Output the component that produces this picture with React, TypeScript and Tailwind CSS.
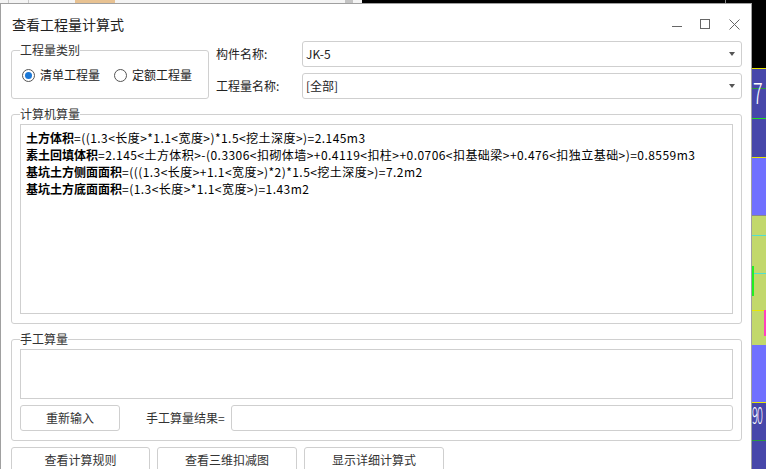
import type { ReactNode } from 'react';

const formulas = [
  { label: '土方体积', expr: '=((1.3<长度>*1.1<宽度>)*1.5<挖土深度>)=2.145m3' },
  {
    label: '素土回填体积',
    expr: '=2.145<土方体积>-(0.3306<扣砌体墙>+0.4119<扣柱>+0.0706<扣基础梁>+0.476<扣独立基础>)=0.8559m3',
  },
  { label: '基坑土方侧面面积', expr: '=(((1.3<长度>+1.1<宽度>)*2)*1.5<挖土深度>)=7.2m2' },
  { label: '基坑土方底面面积', expr: '=(1.3<长度>*1.1<宽度>)=1.43m2' },
];

function Caret() {
  return (
    <svg width="6" height="4" viewBox="0 0 6 4">
      <path d="M0 0h6L3 4z" fill="#555" />
    </svg>
  );
}

function Select({ value }: { value: string }) {
  return (
    <div className="flex h-[26px] items-center justify-between rounded-[3px] border border-[#cfcfcf] bg-white pl-[3px] pr-[6px]">
      <span className="text-[12px] text-[#222]">{value}</span>
      <Caret />
    </div>
  );
}

function Radio({ checked, label }: { checked?: boolean; label: string }) {
  return (
    <label className="flex items-center gap-[5px]">
      <span className="flex h-[13px] w-[13px] items-center justify-center rounded-full border border-[#555] bg-white">
        {checked && <span className="h-[7px] w-[7px] rounded-full bg-[#1c78d6]" />}
      </span>
      <span className="text-[12px] text-[#222]">{label}</span>
    </label>
  );
}

function Group({ title, className, children }: { title: string; className: string; children: ReactNode }) {
  return (
    <fieldset className={`rounded-[3px] border border-[#d0d0d0] px-[8px] ${className}`}>
      <legend className="text-[12px] leading-[16px] text-[#333]">{title}</legend>
      {children}
    </fieldset>
  );
}

function Button({ children, className }: { children: ReactNode; className: string }) {
  return (
    <button className={`flex h-[26px] items-center justify-center rounded-[3px] border border-[#cfcfcf] bg-white text-[12px] text-[#333] ${className}`}>
      {children}
    </button>
  );
}

// CAD view peeking out behind the dialog
function BackgroundStrip() {
  return (
    <div className="flex w-[14px] flex-col overflow-hidden">
      <div className="h-[65px] bg-black" />
      <div className="h-px bg-[#e8e800]" />
      <div className="relative flex h-[88px] flex-col bg-[#4747aa]">
        <div className="mt-[19px] h-px bg-[#2a9a40]" />
        <span className="absolute left-[1px] top-[8px] origin-top-left scale-y-[1.6] text-[18px] leading-[18px] font-light text-white">7</span>
        <div className="mt-[29px] h-px bg-[#22dd22]" />
      </div>
      <div className="h-px bg-[#e8e800]" />
      <div className="h-[57px] bg-[#7070ff]" />
      <div className="h-px bg-[#8a8a8a]" />
      <div className="relative flex h-[129px] flex-col bg-[#c2d86c]">
        <div className="mt-[19px] h-px bg-[#50e0d0]" />
        <div className="mt-[37px] h-px bg-[#50e0d0]" />
        <div className="absolute left-0 top-[50px] h-[30px] w-[2px] bg-[#22ee22]" />
        <div className="mt-[36px] h-px bg-[#e8e800]" />
        <div className="absolute right-0 top-[94px] h-[26px] w-[2px] bg-[#ff40c0]" />
      </div>
      <div className="h-[57px] bg-[#7070ff]" />
      <div className="h-px bg-[#e8e800]" />
      <div className="relative flex flex-1 flex-col bg-[#4747aa]">
        <span className="absolute left-0 top-[-3px] origin-top-left scale-y-[2.2] text-[11px] leading-[12px] font-light tracking-[-1px] text-white">90</span>
        <div className="mt-[37px] h-px bg-[#2a9a40]" />
      </div>
    </div>
  );
}

export default function App() {
  return (
    <div className="flex h-[469px] w-[766px] flex-col overflow-hidden bg-black font-['Noto_Sans_CJK_SC',sans-serif]">
      <div className="flex h-[3px] shrink-0">
        <div className="flex w-[362px] bg-[#f4f4f4]">
          <div className="ml-[8px] w-px bg-[#c8c8c8]" />
          <div className="ml-[19px] w-px bg-[#c8c8c8]" />
          <div className="ml-[46px] w-[40px] bg-[#e0a050] opacity-60" />
          <div className="ml-[230px] w-[8px] bg-[#c4c4c4]" />
        </div>
        <div className="ml-[363px] w-px bg-[#888]" />
      </div>

      <div className="flex min-h-0 flex-1">
        <div className="flex w-[752px] flex-col border-l border-r border-t border-[#a0a0a0] bg-white pl-[10px] pr-[9px]">
          <div className="flex h-[37px] shrink-0 items-center justify-between pl-[1px] pt-[3px]">
            <span className="text-[14px] text-[#222]">查看工程量计算式</span>
            <div className="mr-[2px] flex items-center gap-[18px] text-[#666]">
              <svg width="10" height="12" viewBox="0 0 10 12">
                <path d="M0 8.5h10" stroke="#666" strokeWidth="1" />
              </svg>
              <svg width="11" height="11" viewBox="0 0 11 11">
                <rect x="0.5" y="0.5" width="9" height="9" fill="none" stroke="#666" strokeWidth="1" />
              </svg>
              <svg width="11" height="11" viewBox="0 0 11 11">
                <path d="M0.5 0.5l10 10M10.5 0.5l-10 10" stroke="#666" strokeWidth="1" />
              </svg>
            </div>
          </div>

          <div className="flex shrink-0">
            <Group title="工程量类别" className="mt-[1px] h-[57px] w-[198px]">
              <div className="ml-[2px] mt-[8px] flex items-center gap-[14px]">
                <Radio checked label="清单工程量" />
                <Radio label="定额工程量" />
              </div>
            </Group>
            <div className="ml-[7px] grid flex-1 grid-cols-[86px_1fr] gap-y-[6px]">
              <span className="self-center text-[12px] text-[#222]">构件名称:</span>
              <Select value="JK-5" />
              <span className="self-center text-[12px] text-[#222]">工程量名称:</span>
              <Select value="[全部]" />
            </div>
          </div>

          <Group title="计算机算量" className="mt-[7px] h-[218px] shrink-0">
            <div className="mt-[2px] h-[190px] border border-[#cfcfcf] bg-white pl-[5px] pt-[4px] text-[12px] leading-[17px] tracking-[0.45px] text-black">
              {formulas.map((f) => (
                <div key={f.label} className="whitespace-nowrap">
                  <b className="font-bold tracking-normal">{f.label}</b>
                  {f.expr}
                </div>
              ))}
            </div>
          </Group>

          <Group title="手工算量" className="mt-[7px] h-[110px] shrink-0">
            <div className="mt-[2px] h-[50px] border border-[#cfcfcf] bg-white" />
            <div className="mt-[6px] flex items-center">
              <Button className="w-[100px]">重新输入</Button>
              <span className="ml-[26px] text-[12px] text-[#333]">手工算量结果=</span>
              <div className="ml-[6px] h-[26px] flex-1 rounded-[3px] border border-[#cfcfcf] bg-white" />
            </div>
          </Group>

          <div className="mt-[6px] flex shrink-0 gap-[7px]">
            <Button className="w-[139px]">查看计算规则</Button>
            <Button className="w-[140px]">查看三维扣减图</Button>
            <Button className="w-[140px]">显示详细计算式</Button>
          </div>
        </div>
        <BackgroundStrip />
      </div>
    </div>
  );
}
